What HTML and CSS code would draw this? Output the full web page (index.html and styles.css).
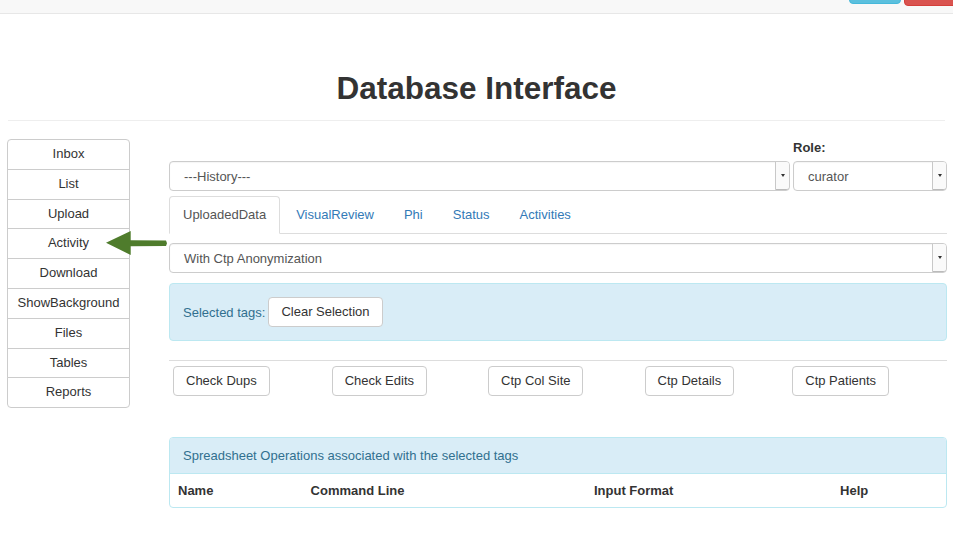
FILE: index.html
```html
<!DOCTYPE html>
<html>
<head>
<meta charset="utf-8">
<title>Database Interface</title>
<link rel="stylesheet" href="styles.css">
</head>
<body>
<div class="navbar">
  <span class="nb nb-info"></span>
  <span class="nb nb-danger"></span>
</div>
<div class="header"><h1>Database Interface</h1></div>
<div class="layout">
  <ul class="side">
    <li>Inbox</li>
    <li>List</li>
    <li>Upload</li>
    <li>Activity</li>
    <li>Download</li>
    <li>ShowBackground</li>
    <li>Files</li>
    <li>Tables</li>
    <li>Reports</li>
  </ul>
  <div class="main">
    <div class="toprow">
      <div class="history">
        <div class="select"><span>---History---</span><span class="caret-box"><span class="caret"></span></span></div>
      </div>
      <div class="role">
        <label class="role-label">Role:</label>
        <div class="select"><span>curator</span><span class="caret-box"><span class="caret"></span></span></div>
      </div>
    </div>
    <ul class="tabs">
      <li class="tab active"><a>UploadedData</a></li>
      <li class="tab"><a>VisualReview</a></li>
      <li class="tab"><a>Phi</a></li>
      <li class="tab"><a>Status</a></li>
      <li class="tab"><a>Activities</a></li>
    </ul>
    <div class="select anon"><span>With Ctp Anonymization</span><span class="caret-box"><span class="caret"></span></span></div>
    <div class="tags-panel">
      <span class="tags-label">Selected tags:</span>
      <button class="btn">Clear Selection</button>
    </div>
    <hr class="sep">
    <table class="ops">
      <tr>
        <td><button class="btn">Check Dups</button></td>
        <td><button class="btn">Check Edits</button></td>
        <td><button class="btn">Ctp Col Site</button></td>
        <td><button class="btn">Ctp Details</button></td>
        <td><button class="btn">Ctp Patients</button></td>
      </tr>
    </table>
    <div class="ss">
      <div class="ss-h">Spreadsheet Operations associated with the selected tags</div>
      <table class="ss-table">
        <tr><th>Name</th><th>Command Line</th><th>Input Format</th><th>Help</th></tr>
      </table>
    </div>
  </div>
</div>
<svg class="arrow" width="63" height="28" viewBox="0 0 63 28">
  <polygon points="1,13.7 25.7,2 25.7,11.3 61,11.6 62,14.3 61,17 25.7,17.3 25.7,26" fill="#4f7c2c"/>
</svg>
</body>
</html>
```
FILE: styles.css
```css
body {
  margin: 0;
  font-family: "Liberation Sans", Arial, sans-serif;
  font-size: 13px;
  color: #333;
  background: #fff;
}

.navbar {
  height: 13px;
  background: #f8f8f8;
  border-bottom: 1px solid #e7e7e7;
  display: flex;
  justify-content: flex-end;
  overflow: hidden;
}

.nb {
  display: block;
  height: 30px;
  border-radius: 4px;
  box-sizing: border-box;
}

.nb-info {
  width: 52px;
  margin-top: -26px;
  margin-right: 3px;
  background: #5bc0de;
  border: 1px solid #46b8da;
}

.nb-danger {
  width: 56px;
  margin-top: -24px;
  margin-right: -7px;
  background: #d9534f;
  border: 1px solid #d43f3a;
}

.header {
  margin: 0 8px;
  padding: 57px 0 15px;
  border-bottom: 1px solid #eee;
}

.header h1 {
  margin: 0;
  font-size: 31.5px;
  line-height: 34px;
  font-weight: bold;
  text-align: center;
  color: #333;
}

.layout {
  display: flex;
  align-items: flex-start;
  margin-top: 18px;
  padding-left: 7px;
}

.side {
  list-style: none;
  margin: 0;
  padding: 0;
  width: 123px;
  flex: none;
}

.side li {
  box-sizing: border-box;
  height: 30.8px;
  line-height: 28.8px;
  border: 1px solid #ccc;
  margin-top: -1px;
  text-align: center;
  background: #fff;
}

.side li:first-child {
  margin-top: 0;
  border-radius: 4px 4px 0 0;
}

.side li:last-child {
  border-radius: 0 0 4px 4px;
}

.main {
  margin-left: 39px;
  width: 778px;
  flex: none;
}

.toprow {
  display: flex;
  align-items: flex-end;
  gap: 3px;
}

.history {
  flex: 1;
}

.role {
  width: 154px;
  flex: none;
}

.role-label {
  display: block;
  font-weight: bold;
  line-height: 17px;
  margin-bottom: 5px;
}

.select {
  box-sizing: border-box;
  height: 30px;
  border: 1px solid #ccc;
  border-radius: 4px;
  display: flex;
  align-items: center;
  padding-left: 14px;
  color: #555;
  background: #fff;
  box-shadow: inset 0 1px 1px rgba(0,0,0,0.04);
}

.caret-box {
  margin-left: auto;
  align-self: stretch;
  width: 13px;
  border-left: 1px solid #c8c8c8;
  border-bottom: 1px solid #bbb;
  border-radius: 0 3px 3px 0;
  display: flex;
  align-items: center;
  justify-content: center;
  background: #fafafa;
}

.caret {
  width: 0;
  height: 0;
  border-left: 2.5px solid transparent;
  border-right: 2.5px solid transparent;
  border-top: 3px solid #333;
}

.tabs {
  list-style: none;
  margin: 5px 0 0;
  padding: 0;
  display: flex;
  border-bottom: 1px solid #ddd;
}

.tab a {
  display: block;
  padding: 10px 13px;
  line-height: 16px;
  margin-right: 2px;
  margin-bottom: -1px;
  border: 1px solid transparent;
  border-radius: 4px 4px 0 0;
  color: #337ab7;
}

.tab.active a {
  color: #555;
  background: #fff;
  border-color: #ddd #ddd transparent;
}

.anon {
  margin-top: 9px;
}

.tags-panel {
  margin-top: 10px;
  box-sizing: border-box;
  height: 58px;
  padding: 0 13px;
  background: #d9edf7;
  border: 1px solid #bce8f1;
  border-radius: 4px;
  display: flex;
  align-items: center;
}

.tags-label {
  color: #31708f;
  margin-right: 3px;
}

.btn {
  font-family: "Liberation Sans", Arial, sans-serif;
  font-size: 13px;
  color: #333;
  background: #fff;
  border: 1px solid #ccc;
  border-radius: 4px;
  padding: 6px 12px;
  line-height: 16px;
  margin: 0;
}

.sep {
  margin: 19px 0 0;
  border: 0;
  border-top: 1px solid #ddd;
}

.ops {
  width: 100%;
  border-collapse: collapse;
}

.ops td {
  padding: 5px 4px;
  text-align: left;
}

.ss {
  margin-top: 36px;
  border: 1px solid #bce8f1;
  border-radius: 4px;
  overflow: hidden;
}

.ss-h {
  background: #d9edf7;
  color: #31708f;
  padding: 10px 13px 9px;
  line-height: 16px;
  border-bottom: 1px solid #bce8f1;
}

.ss-table {
  width: 100%;
  border-collapse: collapse;
}

.ss-table th {
  text-align: left;
  padding: 8px;
  line-height: 17px;
  font-weight: bold;
}

.arrow {
  position: absolute;
  left: 105px;
  top: 229px;
}
```
